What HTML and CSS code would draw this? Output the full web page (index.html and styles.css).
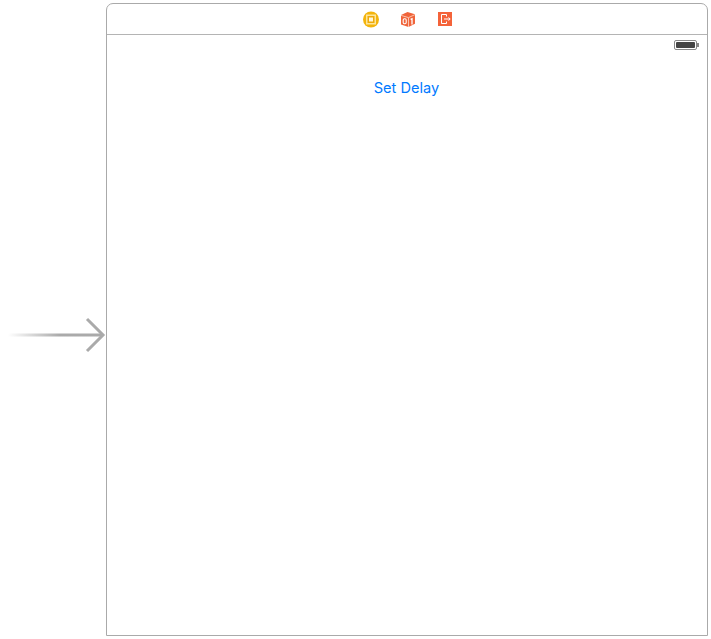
FILE: index.html
```html
<!DOCTYPE html>
<html lang="en">
<head>
<meta charset="utf-8">
<title>Storyboard scene</title>
<link rel="stylesheet" href="styles.css">
</head>
<body>
<div class="canvas">
  <svg class="entry-arrow" width="106" height="36" viewBox="0 0 106 36" aria-hidden="true">
    <defs>
      <linearGradient id="fade" x1="8" y1="0" x2="60" y2="0" gradientUnits="userSpaceOnUse">
        <stop offset="0" stop-color="#aaa" stop-opacity="0"/>
        <stop offset="1" stop-color="#aaa"/>
      </linearGradient>
    </defs>
    <rect x="8" y="16.5" width="94" height="3" fill="url(#fade)"/>
    <path d="M87 2 L103 18 L87 34" fill="none" stroke="#aaa" stroke-width="3"/>
  </svg>
  <section class="scene">
    <header class="dock">
      <svg class="dock-icon" width="16" height="17" viewBox="0 0 16 17" aria-hidden="true">
        <circle cx="8" cy="8.5" r="8" fill="#f3b40c"/>
        <rect x="3" y="3.5" width="10" height="10" fill="#fde59a"/>
        <rect x="4.5" y="5" width="7" height="7" fill="#eeaa08"/>
        <rect x="6" y="6.5" width="4" height="4" fill="#fff6d8"/>
      </svg>
      <svg class="dock-icon" width="16" height="17" viewBox="0 0 16 17" aria-hidden="true">
        <path d="M7.5 1 L15 3.2 L15 12.8 L8.5 16 L1 13.4 L1 4 Z" fill="#f0643a"/>
        <path d="M1 4.4 L8.5 6.6 L15 3.6" fill="none" stroke="#fbc4ae" stroke-width="1"/>
        <path d="M8.5 6.6 V16" stroke="#fbc4ae" stroke-width="1"/>
        <rect x="3.2" y="7.8" width="3" height="5" rx="1.2" fill="none" stroke="#fff" stroke-width="1.1"/>
        <path d="M10.6 8.4 L12 7.8 V13.5" fill="none" stroke="#fff" stroke-width="1.3"/>
      </svg>
      <svg class="dock-icon" width="16" height="17" viewBox="0 0 16 17" aria-hidden="true">
        <rect x="1" y="1" width="14" height="14" fill="#f4633a"/>
        <path d="M9.5 5.5 V3.5 H4.5 V12.5 H9.5 V10.5" fill="none" stroke="#fff" stroke-width="1"/>
        <path d="M7 8 H13 M11.5 6.5 L13.2 8 L11.5 9.5" fill="none" stroke="#fff" stroke-width="1"/>
      </svg>
    </header>
    <div class="screen">
      <div class="status-bar">
        <span class="battery"><span class="battery-level"></span></span>
      </div>
      <div class="actions">
        <button class="link-button" type="button">Set Delay</button>
      </div>
    </div>
  </section>
</div>
</body>
</html>
```

FILE: styles.css
```css
html, body {
  margin: 0;
  padding: 0;
  background: #fff;
}

.canvas {
  position: relative;
  width: 711px;
  height: 639px;
  padding: 3px 0 0 106px;
  box-sizing: border-box;
  overflow: hidden;
}

.entry-arrow {
  position: absolute;
  left: 0;
  top: 317px;
}

.scene {
  width: 602px;
  height: 633px;
  box-sizing: border-box;
  border: 1px solid #aaa;
  border-radius: 7px 7px 0 0;
  display: flex;
  flex-direction: column;
  background: #fff;
}

.dock {
  height: 31px;
  flex: none;
  box-sizing: border-box;
  border-bottom: 1px solid #b4b4b4;
  display: flex;
  align-items: center;
  justify-content: center;
  gap: 21px;
  padding: 1px 0 0 2px;
}

.dock-icon {
  display: block;
  flex: none;
}

.screen {
  flex: 1;
  display: flex;
  flex-direction: column;
}

.status-bar {
  height: 20px;
  box-sizing: border-box;
  display: flex;
  justify-content: flex-end;
  align-items: flex-start;
  padding: 5px 10px 0 0;
}

.battery {
  position: relative;
  display: block;
  width: 23px;
  height: 10px;
  box-sizing: border-box;
  border: 1px solid #888;
  border-radius: 2px;
  padding: 1px;
}

.battery::after {
  content: "";
  position: absolute;
  right: -3px;
  top: 2px;
  width: 2px;
  height: 4px;
  background: #888;
}

.battery-level {
  display: block;
  height: 100%;
  background: #444;
  border-radius: 1px;
}

.actions {
  display: flex;
  justify-content: center;
  padding: 22px 1px 0 0;
}

.link-button {
  border: 0;
  padding: 0;
  background: none;
  font-family: Inter, "Liberation Sans", sans-serif;
  font-size: 14.6px;
  line-height: 22px;
  color: #007aff;
}
```
